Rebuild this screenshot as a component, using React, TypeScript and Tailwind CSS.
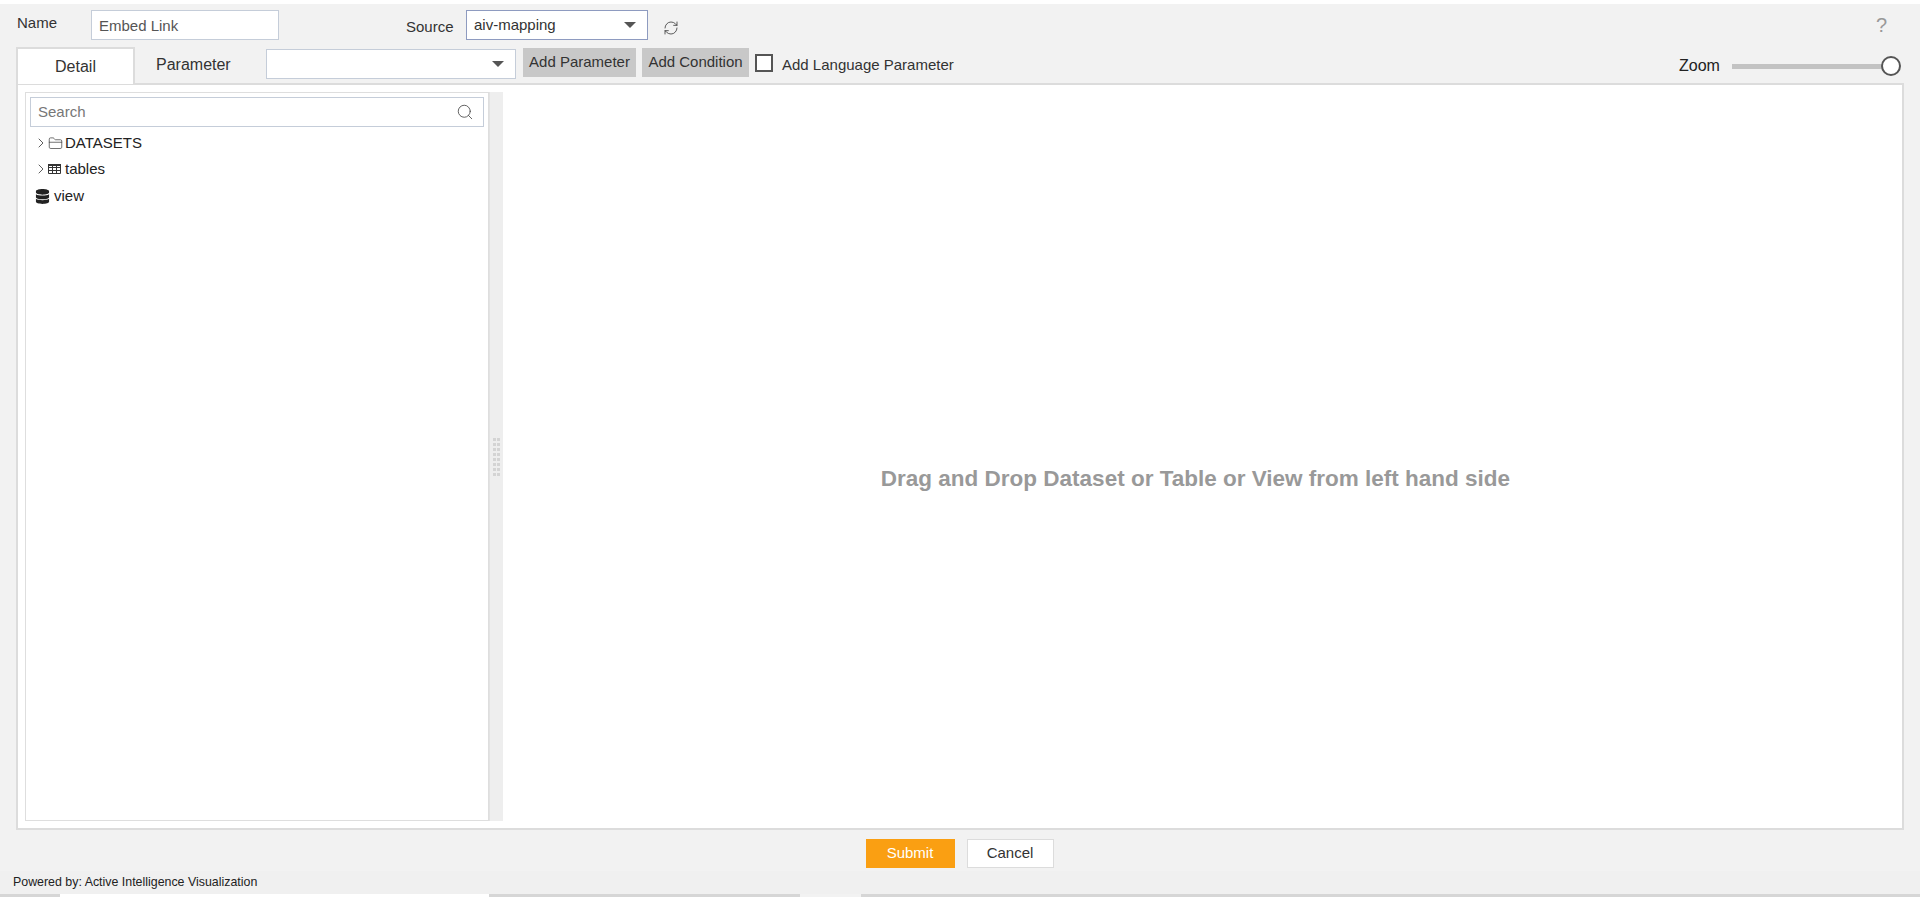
import {ChevronRight, FolderClosed, Search, RefreshCw} from "lucide-react";
import {FaDatabase} from "react-icons/fa";

const Caret = () => {
    return <span className="ml-auto w-0 h-0 border-x-[6px] border-x-transparent border-t-[6px] border-t-[#555]"/>
}

const TableIcon = () => {
    return (
        <svg width="13" height="10" viewBox="0 0 13 10" className="text-[#333]">
            <path d="M0.5 0.5h12v9h-12z M0.5 3.5h12 M0.5 6.5h12 M4.5 0.5v9 M8.5 0.5v9" fill="none" stroke="currentColor"/>
            <rect x="0" y="0" width="13" height="2" fill="currentColor"/>
        </svg>
    );
}

const TreeRow = ({icon, label}) => {
    return (
        <div className="flex items-center h-[26px] ml-[3px]">
            <ChevronRight size={16} strokeWidth={1.2} className="text-[#333]"/>
            <span className="flex justify-start w-[15px] -ml-[1px]">{icon}</span>
            <span className="ml-[2px]">{label}</span>
        </div>
    );
}

export default function App() {
    return (
        <div className="w-[1920px] h-[897px] overflow-hidden flex flex-col bg-white text-[15px] text-[#333] font-['Liberation_Sans',Arial,sans-serif]">
            <div className="h-[4px] shrink-0 bg-white"/>

            <div className="h-[890px] shrink-0 flex flex-col bg-[#f2f2f2]">
                {/*name and source row*/}
                <div className="flex items-start h-[43px] shrink-0 pt-[6px]">
                    <span className="ml-[17px] mt-[2px] w-[74px]">Name</span>
                    <input
                        readOnly
                        value="Embed Link"
                        className="w-[188px] h-[30px] px-[7px] bg-white border border-[#c5cdd9] text-[#555] outline-none"
                    />
                    <span className="ml-[127px] mt-[6px] w-[60px]">Source</span>
                    <div className="flex items-center w-[182px] h-[30px] px-[7px] pr-[11px] bg-white border border-[#8e9bc0]">
                        aiv-mapping
                        <Caret/>
                    </div>
                    <RefreshCw size={16} strokeWidth={1.3} className="ml-[15px] mt-[10px] text-[#444]"/>
                    <span className="ml-auto mr-[33px] mt-[5px] text-[20px] leading-[20px] font-light text-[#999]">?</span>
                </div>

                {/*tabs row*/}
                <div className="flex items-start h-[36px] shrink-0 ml-[16px] mr-[16px] relative z-10">
                    <div className="flex items-center justify-center w-[119px] h-[37px] text-[16px] bg-white border-[2px] border-b-0 border-[#dcdcdc]">Detail</div>
                    <span className="ml-[21px] mt-[6px] w-[110px] text-[16px] text-[#333]">Parameter</span>
                    <div className="flex items-center w-[250px] h-[30px] mt-[2px] pr-[11px] bg-white border border-[#c5cdd9]">
                        <Caret/>
                    </div>
                    <button className="w-[113px] h-[29px] ml-[7px] mt-[1px] pb-[1px] bg-[#c8c8c8]">Add Parameter</button>
                    <button className="w-[107px] h-[29px] ml-[6px] mt-[1px] pb-[1px] bg-[#c8c8c8]">Add Condition</button>
                    <span className="w-[18px] h-[18px] ml-[6px] mt-[7px] bg-white border-[2px] border-[#555]"/>
                    <span className="ml-[9px] mt-[7px]">Add Language Parameter</span>
                    <div className="flex items-center ml-auto mt-[5px] h-[28px] mr-[14px]">
                        <span className="text-[16px] text-[#222] w-[53px]">Zoom</span>
                        <div className="relative w-[158px] h-[5px] bg-[#c3c3c3]">
                            <span className="absolute right-[-11px] top-[-8px] w-[20px] h-[20px] rounded-full bg-white border-[2px] border-[#555]"/>
                        </div>
                    </div>
                </div>

                {/*main panel*/}
                <div className="flex h-[747px] shrink-0 ml-[16px] mr-[16px] p-[7px] pl-[7px] pr-0 bg-white border-[2px] border-[#dcdcdc]">
                    <div className="w-[464px] h-full shrink-0 p-[4px] bg-white border border-[#dedede]">
                        <div className="flex items-center h-[30px] px-[7px] pr-[9px] border border-[#c5cdd9] text-[#777]">
                            Search
                            <Search size={18} strokeWidth={1.1} className="ml-auto text-[#444]"/>
                        </div>
                        <div className="mt-[3px] text-[#222]">
                            <TreeRow
                                label="DATASETS"
                                icon={<FolderClosed size={15} strokeWidth={1.2} className="text-[#444]"/>}
                            />
                            <TreeRow label="tables" icon={<TableIcon/>}/>
                            <div className="flex items-center h-[28px] ml-[5px]">
                                <FaDatabase size={15} className="text-[#222]"/>
                                <span className="ml-[4px]">view</span>
                            </div>
                        </div>
                    </div>

                    {/*splitter*/}
                    <div className="flex items-center justify-center w-[14px] h-full shrink-0 bg-[#eeeeee] border-l border-l-[#e2e2e2]">
                        <div className="grid grid-cols-2 gap-x-[1px] gap-y-[2px]">
                            {Array.from({length: 16}).map((_, idx) => <span key={idx} className="w-[3px] h-[3px] bg-[#d4d4d4]"/>)}
                        </div>
                    </div>

                    <div className="flex-1 flex items-center justify-center pt-[44px] pr-[14px] text-[22.5px] font-bold text-[#999]">
                        Drag and Drop Dataset or Table or View from left hand side
                    </div>
                </div>

                {/*actions*/}
                <div className="flex justify-center items-center gap-[12px] flex-1 pt-[5px] pr-[1px]">
                    <button className="w-[89px] h-[29px] bg-[#fa9f12] text-white">Submit</button>
                    <button className="w-[87px] h-[29px] bg-white border border-[#dcdcdc]">Cancel</button>
                </div>

                <div className="flex items-center h-[23px] shrink-0 pl-[13px] bg-[#f0f0f0] text-[12.4px] text-[#222]">
                    Powered by: Active Intelligence Visualization
                </div>
            </div>

            {/*page strip along the bottom edge*/}
            <div className="flex flex-1 bg-[#d6d6d6]">
                <div className="w-[60px]"/>
                <div className="w-[429px] bg-white"/>
                <div className="w-[311px]"/>
                <div className="w-[61px] bg-[#f2f2f2]"/>
            </div>
        </div>
    );
}
